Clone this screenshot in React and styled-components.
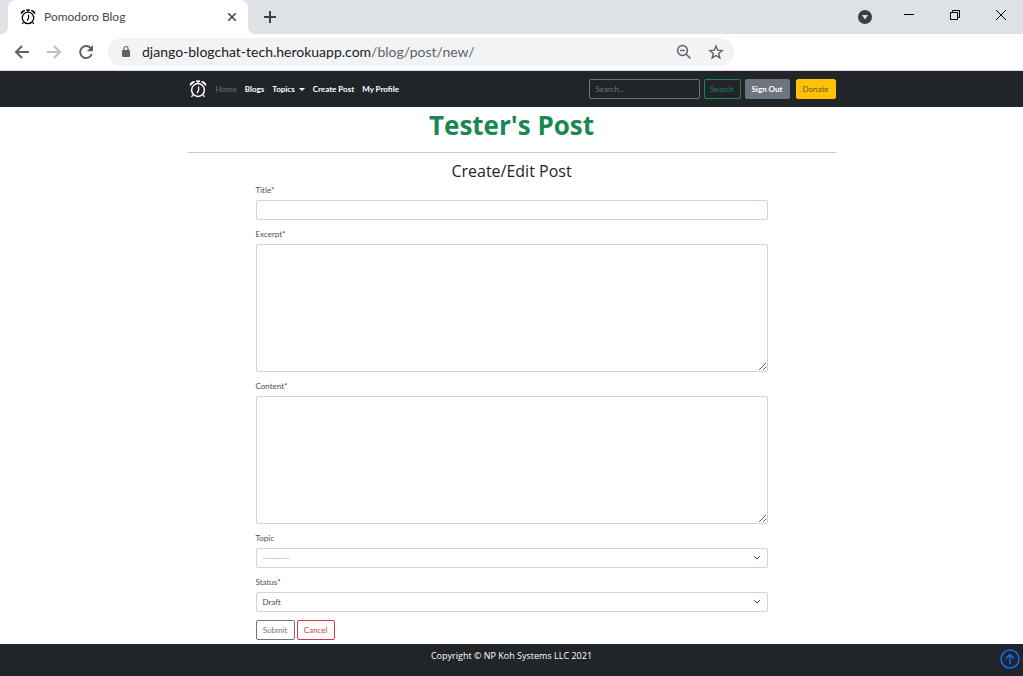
import React from "react";
import styled, { createGlobalStyle, css } from "styled-components";

const GlobalStyle = createGlobalStyle`
  *, *::before, *::after { box-sizing: border-box; }
  html, body { margin: 0; }
  body {
    background: #fff;
    color: #212529;
    font-family: Lato, "Open Sans", sans-serif;
    font-size: 8px;
    line-height: 12px;
  }
  #root { min-height: 100vh; display: flex; }
  button, input, select, textarea { font: inherit; margin: 0; }
  h1, h2, p { margin: 0; }
`;

const wide = css`font-family: "Open Sans", "Noto Sans", sans-serif;`;

const Window = styled.div`
  flex: 1;
  min-width: 0;
  display: flex;
  flex-direction: column;
`;

const TabStrip = styled.header`
  height: 34px;
  display: flex;
  align-items: stretch;
  background: #dee1e6;
  padding-left: 8px;
`;

const Tab = styled.div`
  position: relative;
  width: 240px;
  display: flex;
  align-items: center;
  padding: 0 10px 0 12px;
  gap: 8px;
  background: #fff;
  border-radius: 8px 8px 0 0;
  color: #000;
  font-size: 12px;
  line-height: 16px;
  &::before, &::after {
    content: "";
    position: absolute;
    bottom: 0;
    width: 8px;
    height: 8px;
  }
  &::before {
    left: -8px;
    background: radial-gradient(circle at 0 0, #dee1e6 8px, #fff 8px);
  }
  &::after {
    right: -8px;
    background: radial-gradient(circle at 100% 0, #dee1e6 8px, #fff 8px);
  }
`;

const TabTitle = styled.span`
  flex: 1;
  color: #45494d;
`;

const IconButton = styled.button`
  display: flex;
  align-items: center;
  justify-content: center;
  width: ${(p) => p.$size || 16}px;
  height: ${(p) => p.$size || 16}px;
  padding: 0;
  border: 0;
  background: none;
  color: ${(p) => p.$color || "#5f6368"};
`;

const NewTab = styled(IconButton)`
  margin-left: 14px;
  align-self: center;
`;

const WindowControls = styled.div`
  margin-left: auto;
  display: flex;
  align-items: center;
  gap: 30px;
  padding: 0 14px 4px 0;
`;

const Toolbar = styled.div`
  height: 37px;
  display: flex;
  align-items: center;
  gap: 16px;
  padding: 0 14px;
  background: #fff;
  border-bottom: 1px solid #dadce0;
`;

const AddressBar = styled.div`
  flex: 0 1 626px;
  height: 28px;
  margin-left: -2px;
  display: flex;
  align-items: center;
  padding: 0 10px;
  gap: 8px;
  border-radius: 14px;
  background: #f1f3f4;
`;

const Url = styled.span`
  flex: 1;
  color: #5f6368;
  font-size: 14px;
  line-height: 20px;
  b { font-weight: 400; color: #202124; }
`;

const AddressActions = styled.span`
  display: flex;
  gap: 16px;
`;

const NavBar = styled.nav`
  background: #212529;
  padding: 8px 0;
`;

const Container = styled.div`
  width: 100%;
  max-width: 660px;
  margin: 0 auto;
  padding: 0 6px;
`;

const NavRow = styled(Container)`
  display: flex;
  align-items: center;
`;

const Brand = styled.a`
  display: flex;
  color: #fff;
  margin: 0 9px 0 1px;
`;

const NavLinks = styled.div`
  display: flex;
  gap: 8px;
  margin-right: auto;
`;

const NavLink = styled.a`
  display: flex;
  align-items: center;
  gap: 4px;
  color: ${(p) => (p.$muted ? "#6c7277" : "#fff")};
  font-weight: ${(p) => (p.$muted ? 400 : 700)};
  text-decoration: none;
`;

const Caret = styled.span`
  border: 3px solid transparent;
  border-top-color: currentColor;
  border-bottom: 0;
`;

const SearchForm = styled.form`
  display: flex;
  gap: 4px;
  margin-right: 4px;
`;

const control = css`
  height: 20px;
  padding: 0 6px;
  border: 1px solid #ced4da;
  border-radius: 2px;
  background: #fff;
  color: #495057;
  font-size: 8px;
  line-height: 12px;
`;

const SearchInput = styled.input`
  ${control}
  width: 111px;
  border-color: #6c757d;
  background: transparent;
  &::placeholder { color: #6c757d; opacity: 1; }
`;

const tones = {
  success: css`border-color: #198754; color: #198754; background: transparent;`,
  secondary: css`border-color: #6c757d; color: #fff; background: #6c757d; font-weight: 700;`,
  warning: css`border-color: #ffc107; color: #6b5a1e; background: #ffc107;`,
  outline: css`border-color: #6c757d; color: #6c757d; background: transparent;`,
  danger: css`border-color: #dc3545; color: #dc3545; background: transparent;`,
};

const Button = styled.button`
  ${control}
  min-width: ${(p) => p.$width}px;
  padding: 0;
  text-align: center;
  ${(p) => tones[p.$tone]}
`;

const NavButtons = styled.div`
  display: flex;
  gap: 6px;
`;

const Main = styled.main`
  flex: 1;
`;

const PageTitle = styled.h1`
  ${wide}
  padding-bottom: 9px;
  text-align: center;
  color: #198754;
  font-size: 26px;
  line-height: 36px;
  font-weight: 700;
`;

const Rule = styled.hr`
  margin: 0 0 8px;
  border: 0;
  border-top: 1px solid #c8c9ca;
`;

const FormTitle = styled.h2`
  ${wide}
  padding-bottom: 3px;
  text-align: center;
  font-size: 16px;
  line-height: 20px;
  font-weight: 400;
`;

const PostForm = styled.form`
  max-width: 512px;
  margin: 0 auto;
`;

const Field = styled.div`
  display: flex;
  flex-direction: column;
  gap: 4px;
  margin-bottom: 8px;
`;

const Label = styled.label`
  color: #495057;
`;

const TextInput = styled.input`
  ${control}
`;

const TextArea = styled.textarea`
  ${control}
  display: block;
  height: 128px;
  resize: vertical;
`;

const SelectWrap = styled.div`
  display: grid;
  align-items: center;
  > * { grid-area: 1 / 1; }
  > svg { justify-self: end; margin-right: 7px; pointer-events: none; }
`;

const Select = styled.select`
  ${control}
  appearance: none;
  width: 100%;
  color: ${(p) => (p.$empty ? "#8b9095" : "#495057")};
`;

const Actions = styled.div`
  display: flex;
  gap: 2px;
  padding-bottom: 4px;
`;

const Footer = styled.footer`
  ${wide}
  position: relative;
  height: 32px;
  padding-top: 4px;
  background: #212529;
  color: #fff;
  text-align: center;
  font-size: 9px;
  line-height: 16px;
`;

const ToTop = styled.a`
  position: absolute;
  right: 3px;
  top: 5px;
  display: flex;
  color: #0d6efd;
`;

const Clock = ({ size = 18 }) => (
  <svg width={size} height={size} viewBox="0 0 18 18" fill="none" stroke="currentColor" aria-hidden="true">
    <circle cx="9" cy="10" r="6.400" strokeWidth="1.500" />
    <path d="M9.600 6.400v4L8 13.200M9 1v2.400M3.900 15l-1.400 1.800M14.100 15l1.400 1.800" strokeWidth="1.300" />
    <path d="M7 1.200h4" strokeWidth="1.600" />
    <path d="M1.200 5.600C.8 3.200 2.800 1.200 5.600 1.700zM16.800 5.600c.4-2.400-1.600-4.400-4.400-3.900z" fill="currentColor" strokeWidth=".8" />
  </svg>
);

const Svg = ({ size = 16, w = 2, children }) => (
  <svg width={size} height={size} viewBox="0 0 16 16" fill="none" stroke="currentColor" strokeWidth={w} aria-hidden="true">
    {children}
  </svg>
);

const Chevron = () => (
  <svg width="8" height="8" viewBox="0 0 16 16" fill="none" stroke="#343a40" strokeWidth="2" strokeLinecap="round" strokeLinejoin="round" aria-hidden="true">
    <path d="m3 5 5 5 5-5" />
  </svg>
);

function BrowserChrome() {
  return (
    <>
      <TabStrip>
        <Tab>
          <Clock size={16} />
          <TabTitle>Pomodoro Blog</TabTitle>
          <IconButton $size={12} $color="#3c4043" aria-label="Close tab">
            <Svg size={12}><path d="M3 3l10 10M13 3L3 13" /></Svg>
          </IconButton>
        </Tab>
        <NewTab $color="#3c4043" aria-label="New tab">
          <Svg><path d="M8 2v12M2 8h12" /></Svg>
        </NewTab>
        <WindowControls>
          <IconButton aria-label="Search tabs">
            <svg width="16" height="20" viewBox="0 0 16 20" overflow="visible" aria-hidden="true">
              <circle cx="10" cy="12" r="7" fill="#3c4043" />
              <path d="M7 10h6l-3 4.500z" fill="#dee1e6" />
            </svg>
          </IconButton>
          <IconButton $color="#000" aria-label="Minimize">
            <Svg w={1}><path d="M3 7.500h10" /></Svg>
          </IconButton>
          <IconButton $color="#000" aria-label="Restore">
            <Svg w={1}><path d="M3.500 5.500h7v7h-7zM5.500 5.500v-2h7v7h-2" /></Svg>
          </IconButton>
          <IconButton $color="#000" aria-label="Close">
            <Svg w={1}><path d="M3 3l10 10M13 3L3 13" /></Svg>
          </IconButton>
        </WindowControls>
      </TabStrip>
      <Toolbar>
        <IconButton aria-label="Back"><Svg><path d="M15 8H2M8 2L2 8l6 6" /></Svg></IconButton>
        <IconButton $color="#bdc1c6" aria-label="Forward"><Svg><path d="M1 8h13M8 2l6 6-6 6" /></Svg></IconButton>
        <IconButton aria-label="Reload">
          <Svg><path d="M13.800 10A6 6 0 1 1 12.600 4" /><path d="M15 1v6.200H8.800z" fill="currentColor" stroke="none" /></Svg>
        </IconButton>
        <AddressBar>
          <Svg>
            <rect x="4" y="6" width="8" height="7" rx="1" fill="currentColor" stroke="none" color="#5f6368" />
            <path d="M6 6.500V4.500a2 2 0 0 1 4 0v2" stroke="#5f6368" strokeWidth="1.200" />
          </Svg>
          <Url><b>django-blogchat-tech.herokuapp.com</b>/blog/post/new/</Url>
          <AddressActions>
            <IconButton aria-label="Zoom">
              <Svg w={1.5}><circle cx="6.500" cy="6.500" r="4.900" /><path d="M10.200 10.200l4.300 4.300M4.200 6.500h4.600" /></Svg>
            </IconButton>
            <IconButton aria-label="Bookmark this page">
              <Svg w={1.4}><path d="M8 2l1.700 4.200 4.500.3-3.500 2.900 1.100 4.500L8 11.500l-3.800 2.400 1.100-4.500-3.500-2.900 4.500-.3z" /></Svg>
            </IconButton>
          </AddressActions>
        </AddressBar>
      </Toolbar>
    </>
  );
}

export default function App() {
  return (
    <>
      <GlobalStyle />
      <Window>
        <BrowserChrome />
        <NavBar>
          <NavRow>
            <Brand href="#" aria-label="Pomodoro Blog"><Clock /></Brand>
            <NavLinks>
              <NavLink href="#" $muted>Home</NavLink>
              <NavLink href="#">Blogs</NavLink>
              <NavLink href="#">Topics <Caret /></NavLink>
              <NavLink href="#">Create Post</NavLink>
              <NavLink href="#">My Profile</NavLink>
            </NavLinks>
            <SearchForm>
              <SearchInput placeholder="Search..." aria-label="Search" />
              <Button type="button" $tone="success" $width={37}>Search</Button>
            </SearchForm>
            <NavButtons>
              <Button $tone="secondary" $width={45}>Sign Out</Button>
              <Button $tone="warning" $width={40}>Donate</Button>
            </NavButtons>
          </NavRow>
        </NavBar>
        <Main>
          <Container>
            <PageTitle>Tester's Post</PageTitle>
            <Rule />
            <PostForm>
              <FormTitle>Create/Edit Post</FormTitle>
              <Field><Label htmlFor="title">Title*</Label><TextInput id="title" /></Field>
              <Field><Label htmlFor="excerpt">Excerpt*</Label><TextArea id="excerpt" /></Field>
              <Field><Label htmlFor="content">Content*</Label><TextArea id="content" /></Field>
              <Field>
                <Label htmlFor="topic">Topic</Label>
                <SelectWrap><Select id="topic" $empty><option>---------</option></Select><Chevron /></SelectWrap>
              </Field>
              <Field>
                <Label htmlFor="status">Status*</Label>
                <SelectWrap><Select id="status"><option>Draft</option></Select><Chevron /></SelectWrap>
              </Field>
              <Actions>
                <Button type="button" $tone="outline" $width={39}>Submit</Button>
                <Button type="button" $tone="danger" $width={38}>Cancel</Button>
              </Actions>
            </PostForm>
          </Container>
        </Main>
        <Footer>
          <p>Copyright © NP Koh Systems LLC 2021</p>
          <ToTop href="#" aria-label="Back to top">
            <svg width="20" height="20" viewBox="0 0 20 20" fill="none" stroke="currentColor" strokeWidth="1.500" aria-hidden="true">
              <circle cx="10" cy="10" r="9" /><path d="M10 15V6M6 9.500l4-4 4 4" />
            </svg>
          </ToTop>
        </Footer>
      </Window>
    </>
  );
}
